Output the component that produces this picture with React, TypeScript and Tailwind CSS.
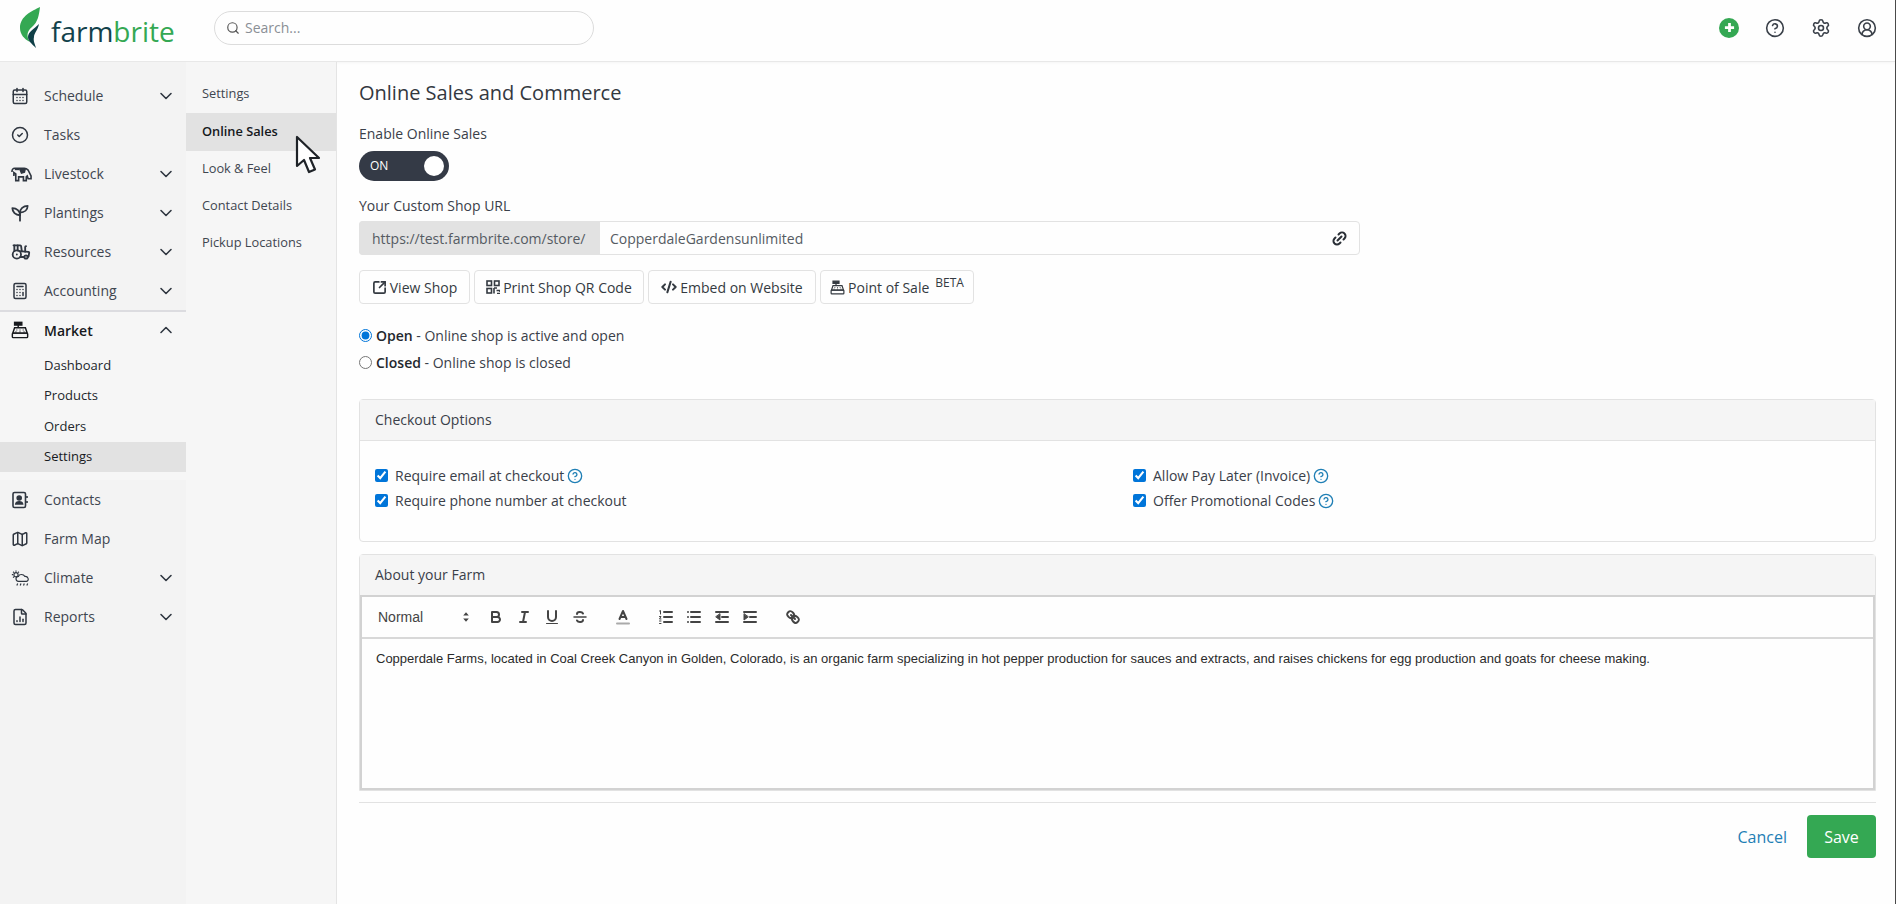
import React from 'react';
import {
  Search, ChevronDown, ChevronUp, CalendarDays, CircleCheck, Tractor, Calculator, Map,
  FileChartColumn, CircleQuestionMark, Settings, CircleUserRound, SquareArrowOutUpRight, CodeXml, Link2,
} from 'lucide-react';

const RegisterIcon = ({ className = 'w-[18px] h-[18px]' }: { className?: string }) => (
  <svg viewBox="0 0 20 20" className={className} fill="none" stroke="currentColor" strokeWidth="1.6">
    <rect x="4" y="1.5" width="8" height="3" fill="currentColor" />
    <path d="M8 4.5v3" />
    <path d="M4 7.5h12l2 6H2z" />
    <rect x="1.5" y="13.5" width="17" height="5" rx="1" />
    <path d="M6 10h1M9.500 10h1M13 10h1M5 12h1M9.500 12h1M14 12h1" strokeWidth="1.3" />
  </svg>
);

const CowIcon = () => (
  <svg viewBox="0 0 22 18" className="w-[21px] h-[18px]" fill="none" stroke="currentColor" strokeWidth="1.7">
    <path d="M1 7c0-3 1-4 3-4h10c2 0 3 1 4 2l3 6v3h-3l-1-3-1 1v4h-3v-4H8v4H5V9L3 7.500V11" />
    <path d="M9 3l2 5 3-1 1-4" fill="currentColor" />
    <path d="M4 3h5v2H4z" fill="currentColor" stroke="none" />
  </svg>
);

const PlantIcon = () => (
  <svg viewBox="0 0 20 20" className="w-[18px] h-[18px]" fill="none" stroke="currentColor" strokeWidth="2" strokeLinejoin="round" strokeLinecap="round">
    <path d="M10 18.500V9" />
    <path d="M10 12.500C5 12.500 1.500 9 1.500 4.500 6.500 4.500 10 8 10 12.500Z" />
    <path d="M10 9.500C10 5.500 13.500 2 18.500 2 18.500 6.500 15 9.500 10 9.500Z" />
  </svg>
);

const ContactIcon = () => (
  <svg viewBox="0 0 18 18" className="w-[18px] h-[18px]" fill="none" stroke="currentColor" strokeWidth="1.6">
    <rect x="2" y="1.500" width="12.500" height="15" rx="1.500" />
    <path d="M16 5v2M16 10v2" />
    <circle cx="8.200" cy="7" r="2" fill="currentColor" />
    <path d="M4.800 13c.4-3 6.400-3 6.800 0z" fill="currentColor" />
  </svg>
);

const ClimateIcon = () => (
  <svg viewBox="0 0 24 20" className="w-5 h-[18px]" fill="none" stroke="currentColor" strokeWidth="1.4">
    <circle cx="6" cy="6" r="2.500" />
    <path d="M6 1v1.500M1 6h1.500M2.500 2.500l1 1M9.500 2.500l-1 1M2.500 9.500l1-1" />
    <path d="M9 14a3 3 0 0 1 0-6c1-3 6-3 7.500 0 4-.5 6 5 2 6z" />
    <path d="M8 16.500l-1 2.500M12 16.500l-1 2.500M16 16.500l-1 2.500M20 16.500l-1 2.500" />
  </svg>
);

const QrIcon = () => (
  <svg viewBox="0 0 14 14" className="w-[14px] h-[14px]" fill="none" stroke="currentColor" strokeWidth="1.600">
    <rect x="1" y="1" width="4.500" height="4.500" />
    <rect x="8.500" y="1" width="4.500" height="4.500" />
    <rect x="1" y="8.500" width="4.500" height="4.500" />
    <path d="M8 8h3M8 8v5.500M10.500 10.500h3.500v1.500M11 13.500h3" />
  </svg>
);

const LogoLeaf = () => (
  <svg viewBox="0 0 21 41" className="w-[21px] h-[41px]">
    <path d="M20 0C12 4 0 9 0 21 0 27 4 32 10 35 6 29 7 24 12 20 18 15 19 8 20 0Z" fill="#34a853" />
    <path d="M19 17C14 22 8 25 8 30 8 34 12 37 16 41 15 37 13 34 14 30 14 26 18 23 19 17Z" fill="#0f3f47" />
  </svg>
);

const CursorIcon = () => (
  <svg viewBox="0 0 26 42" className="w-[26px] h-[42px]">
    <path d="M2 2v29l7-6 5 12 6-2.500-5-11.500h9z" fill="#fff" stroke="#1f2328" strokeWidth="2.200" strokeLinejoin="round" />
  </svg>
);

const ql = { fill: 'none', stroke: '#444', strokeWidth: 2, strokeLinecap: 'round' as const, strokeLinejoin: 'round' as const };

const QuillBtn = ({ children }: { children: React.ReactNode }) => (
  <span className="w-7 h-6 flex items-center justify-center">
    <svg viewBox="0 0 18 18" className="w-[18px] h-[18px]" {...ql}>{children}</svg>
  </span>
);

const Help = () => <CircleQuestionMark className="w-4 h-4 text-[#1f7fb5] ml-[3px]" strokeWidth={2} />;

const mainNav: { label: string; icon: React.ReactNode; caret?: boolean }[] = [
  { label: 'Schedule', icon: <CalendarDays className="w-[18px] h-[18px]" />, caret: true },
  { label: 'Tasks', icon: <CircleCheck className="w-[18px] h-[18px]" /> },
  { label: 'Livestock', icon: <CowIcon />, caret: true },
  { label: 'Plantings', icon: <PlantIcon />, caret: true },
  { label: 'Resources', icon: <Tractor className="w-5 h-5" strokeWidth={2.200} />, caret: true },
  { label: 'Accounting', icon: <Calculator className="w-[18px] h-[18px]" />, caret: true },
];

const lowerNav: { label: string; icon: React.ReactNode; caret?: boolean }[] = [
  { label: 'Contacts', icon: <ContactIcon /> },
  { label: 'Farm Map', icon: <Map className="w-[18px] h-[18px]" /> },
  { label: 'Climate', icon: <ClimateIcon />, caret: true },
  { label: 'Reports', icon: <FileChartColumn className="w-[18px] h-[18px]" />, caret: true },
];

const NavRow = ({ label, icon, caret }: { label: string; icon: React.ReactNode; caret?: boolean }) => (
  <div className="h-[39px] flex items-center pl-[11px] pr-[10px] text-[#3f4650]">
    <span className="w-[33px] flex items-center text-[#2f3640]">{icon}</span>
    <span className="flex-1 text-[14px]">{label}</span>
    {caret && <ChevronDown className="w-5 h-5 text-[#2f3640]" strokeWidth={1.900} />}
  </div>
);

export default function App() {
  return (
    <div className="h-[904px] w-full flex flex-col overflow-hidden bg-[#fefefe] text-[14px] text-[#3a4049] border-r border-[#4a4a4a] font-['Open_Sans','Noto_Sans',sans-serif]">
      <header className="h-[62px] shrink-0 flex items-center border-b border-[#e8e8e8] shadow-[0_1px_3px_rgba(0,0,0,0.04)] pr-[18px] pb-[6px]">
        <div className="w-[214px] pl-[20px] flex items-center gap-[10px]">
          <LogoLeaf />
          <span className="text-[28px] leading-none mt-[6px]">
            <span className="text-[#12424b]">farm</span>
            <span className="text-[#34a853]">brite</span>
          </span>
        </div>
        <div className="w-[380px] h-[34px] border border-[#dcdcdc] rounded-full flex items-center pl-[11px] gap-[5px]">
          <Search className="w-[14px] h-[14px] text-[#555]" strokeWidth={2} />
          <span className="text-[14px] text-[#8a8f95]">Search...</span>
        </div>
        <div className="ml-auto flex items-center gap-[26px] text-[#3a4049]">
          <span className="w-5 h-5 rounded-full bg-[#34a853] flex items-center justify-center">
            <svg viewBox="0 0 12 12" className="w-[11px] h-[11px]"><path d="M6 1v10M1 6h10" stroke="#fff" strokeWidth="3" /></svg>
          </span>
          <CircleQuestionMark className="w-5 h-5" strokeWidth={1.900} />
          <Settings className="w-5 h-5" strokeWidth={1.900} />
          <CircleUserRound className="w-5 h-5" strokeWidth={1.900} />
        </div>
      </header>

      <div className="flex-1 flex min-h-0">
        <aside className="w-[186px] shrink-0 bg-[#f3f3f3] pt-[14px]">
          {mainNav.map((n) => <NavRow key={n.label} {...n} />)}
          <div className="bg-[#f6f6f6] border-t-2 border-[#dcdce0] h-[170px] flex flex-col">
            <div className="h-[36px] mb-[2px] shrink-0 flex items-center pl-[11px] pr-[10px] text-[#17191d] font-semibold">
              <span className="w-[33px] flex items-center"><RegisterIcon /></span>
              <span className="flex-1 text-[14px]">Market</span>
              <ChevronUp className="w-5 h-5 text-[#2f3640]" strokeWidth={1.900} />
            </div>
            {['Dashboard', 'Products', 'Orders'].map((s) => (
              <div key={s} className="h-[30.500px] shrink-0 flex items-center pl-[44px] text-[13px] text-[#22262b]">{s}</div>
            ))}
            <div className="h-[30px] shrink-0 flex items-center pl-[44px] pt-[1px] text-[13px] text-[#17191d] bg-[#e2e2e2]">Settings</div>
          </div>
          <div>
            {lowerNav.map((n) => <NavRow key={n.label} {...n} />)}
          </div>
        </aside>

        <nav className="w-[151px] shrink-0 bg-[#f6f6f6] border-r border-[#e4e4e4] pt-[13px] text-[12.800px] text-[#3f4650] relative">
          <div className="h-[37.500px] flex items-center pl-[16px]">Settings</div>
          <div className="h-[38px] flex items-center pl-[16px] bg-[#e2e2e2] text-[#15181c] font-semibold">Online Sales</div>
          <div className="h-[37px] flex items-center pl-[16px]">Look &amp; Feel</div>
          <div className="h-[37px] flex items-center pl-[16px]">Contact Details</div>
          <div className="h-[37px] flex items-center pl-[16px]">Pickup Locations</div>
          <div className="absolute left-[109px] top-[73px]"><CursorIcon /></div>
        </nav>

        <main className="flex-1 min-w-0 pl-[22px] pr-[19px]">
          <h1 className="text-[20px] leading-[28px] mt-[17px] text-[#33383f]">Online Sales and Commerce</h1>
          <div className="mt-[17px] leading-[20px]">Enable Online Sales</div>
          <div className="mt-[7px] w-[90px] h-[30px] rounded-full bg-[#343a46] flex items-center justify-between pl-[11px] pr-[5px]">
            <span className="text-[12px] text-white">ON</span>
            <span className="w-[20px] h-[20px] rounded-full bg-white" />
          </div>
          <div className="mt-[15px] leading-[20px]">Your Custom Shop URL</div>
          <div className="mt-[5px] w-[1001px] h-[34px] flex border border-[#e2e2e2] rounded">
            <div className="w-[241px] -ml-px -my-px bg-[#e2e2e2] rounded-l flex items-center pl-[13px] text-[#555b62]">https://test.farmbrite.com/store/</div>
            <div className="flex-1 flex items-center pl-[10px] pr-[11px] text-[#555b62]">
              <span className="flex-1">CopperdaleGardensunlimited</span>
              <Link2 className="w-[17px] h-[17px] text-[#2a2f36] -rotate-45" strokeWidth={2.800} />
            </div>
          </div>
          <div className="mt-[15px] flex gap-1">
            <Btn w="w-[111px]"><SquareArrowOutUpRight className="w-[15px] h-[15px]" strokeWidth={2.700} />View Shop</Btn>
            <Btn w="w-[170px]"><QrIcon />Print Shop QR Code</Btn>
            <Btn w="w-[168px]"><CodeXml className="w-4 h-4" strokeWidth={3} />Embed on Website</Btn>
            <Btn w="w-[154px]"><RegisterIcon className="w-[15px] h-[15px]" />Point of Sale<sup className="text-[12px] ml-[3px] -top-[4px]">BETA</sup></Btn>
          </div>
          <div className="mt-[21px] flex items-center h-[20px]">
            <input type="radio" name="shop" defaultChecked className="w-[13px] h-[13px] mr-[4px] accent-[#0075d9]" />
            <span><b className="font-semibold text-[#23272d]">Open</b> - Online shop is active and open</span>
          </div>
          <div className="mt-[7px] flex items-center h-[20px]">
            <input type="radio" name="shop" className="w-[13px] h-[13px] mr-[4px]" />
            <span><b className="font-semibold text-[#23272d]">Closed</b> - Online shop is closed</span>
          </div>

          <section className="mt-[27px] h-[143px] border border-[#e2e2e2] rounded">
            <div className="h-[41px] bg-[#f5f5f5] border-b border-[#e2e2e2] flex items-center pl-[15px] pb-[2px]">Checkout Options</div>
            <div className="grid grid-cols-2 pl-[15px] pt-[22px]">
              <div>
                <Check label="Require email at checkout" help />
                <Check label="Require phone number at checkout" />
              </div>
              <div className="pl-[8px]">
                <Check label="Allow Pay Later (Invoice)" help />
                <Check label="Offer Promotional Codes" help />
              </div>
            </div>
          </section>

          <section className="mt-[12px] border border-[#e2e2e2] rounded-t">
            <div className="h-[40px] bg-[#f5f5f5] flex items-center pl-[15px] pb-[1px]">About your Farm</div>
            <div className="h-[195px] border-2 border-[#d2d2d2] flex flex-col">
              <div className="h-[42px] border-b-2 border-[#d8d8d8] flex items-center pl-[8px] text-[#444] font-['Liberation_Sans',sans-serif]">
                <div className="w-[108px] flex items-center pl-[8px] pr-[8px] text-[14px] justify-between mr-[4px]">
                  Normal
                  <svg viewBox="0 0 10 14" className="w-[8px] h-[12px]"><path d="M5 1l3.500 4h-7zM5 13l3.500-4h-7z" fill="#444" /></svg>
                </div>
                <QuillBtn>
                  <path d="M5,4H9.500A2.500,2.500,0,0,1,12,6.500v0A2.500,2.500,0,0,1,9.500,9H5V4Z" />
                  <path d="M5,9h5.500A2.500,2.500,0,0,1,13,11.500v0A2.500,2.500,0,0,1,10.500,14H5V9Z" />
                </QuillBtn>
                <QuillBtn>
                  <path d="M7 4h6M5 14h6M8 14l2-10" />
                </QuillBtn>
                <QuillBtn>
                  <path d="M5,3V9a4,4,0,0,0,8,0V3" />
                  <path d="M3.500 15.500h11" strokeWidth="1" />
                </QuillBtn>
                <QuillBtn>
                  <path d="M15 9H3" strokeWidth="1.500" />
                  <path d="M12 5.500C11 3.500 6 3.500 6 6M6 12.500C7 14.500 12 14.500 12 12" />
                </QuillBtn>
                <div className="w-[15px]" />
                <QuillBtn>
                  <path d="M3 15.500h12" stroke="#aaa" strokeWidth="2" />
                  <path d="M5.500 11L9 3l3.500 8M11.600 9H6.400" />
                </QuillBtn>
                <div className="w-[15px]" />
                <QuillBtn>
                  <path d="M7 4h8M7 9h8M7 14h8" />
                  <path d="M2.500 3L3.500 2.500V6M2.500 8.500h1.500L2.500 11H4M2.500 13h1.500M2.500 15.500h1.500" strokeWidth="1" />
                </QuillBtn>
                <QuillBtn>
                  <path d="M6 4h9M6 9h9M6 14h9M3 4h0M3 9h0M3 14h0" />
                </QuillBtn>
                <QuillBtn>
                  <path d="M3 14h12M3 4h12M9 9h6" />
                  <path d="M7 6v6L3 9z" fill="#444" strokeWidth="1" />
                </QuillBtn>
                <QuillBtn>
                  <path d="M3 14h12M3 4h12M9 9h6" />
                  <path d="M3 6v6l4-3z" fill="#444" strokeWidth="1" />
                </QuillBtn>
                <div className="w-[15px]" />
                <QuillBtn>
                  <path d="M7 7l4 4" />
                  <path d="M8.900,4.577a3.476,3.476,0,0,1,.36,4.679A3.476,3.476,0,0,1,4.577,8.900C3.185,7.500,2.035,6.400,4.217,4.217S7.500,3.185,8.900,4.577Z" />
                  <path d="M13.423,9.100a3.476,3.476,0,0,0-4.679-.36,3.476,3.476,0,0,0,.36,4.679c1.392,1.392,2.500,2.542,4.679.36S14.815,10.500,13.423,9.100Z" />
                </QuillBtn>
              </div>
              <div className="pl-[14px] pt-[9.500px] text-[13px] leading-[20px] text-[#2b2b2b] font-['Liberation_Sans',sans-serif]">
                Copperdale Farms, located in Coal Creek Canyon in Golden, Colorado, is an organic farm specializing in hot pepper production for sauces and extracts, and raises chickens for egg production and goats for cheese making.
              </div>
            </div>
          </section>

          <div className="mt-[11px] border-t border-[#e2e2e2] pt-[12px] flex justify-end items-center gap-[20px]">
            <span className="text-[16px] text-[#1f7fb5]">Cancel</span>
            <span className="w-[69px] h-[43px] rounded bg-[#34a853] text-white text-[16px] flex items-center justify-center">Save</span>
          </div>
        </main>
      </div>
    </div>
  );
}

function Btn({ w, children }: { w: string; children: React.ReactNode }) {
  return (
    <div className={`${w} h-[34px] border border-[#e2e2e2] rounded flex items-center justify-center gap-[3px] text-[#343a41]`}>
      {children}
    </div>
  );
}

function Check({ label, help }: { label: string; help?: boolean }) {
  return (
    <div className="h-[25px] flex items-center">
      <input type="checkbox" defaultChecked className="w-[13px] h-[13px] mr-[7px] accent-[#0075d9]" />
      <span>{label}</span>
      {help && <Help />}
    </div>
  );
}
